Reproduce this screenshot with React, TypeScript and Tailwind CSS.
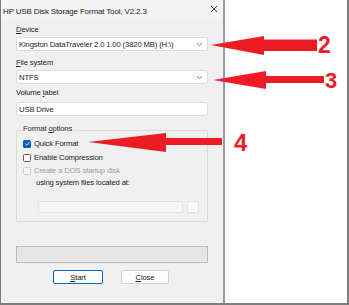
import React from "react";

function Chevron() {
  return (
    <svg width="7" height="5" viewBox="0 0 7 5" className="shrink-0">
      <path d="M1 1.2 L3.5 3.6 L6 1.2" fill="none" stroke="#6b6b6b" strokeWidth="0.9" />
    </svg>
  );
}

function Select({ value }: { value: string }) {
  return (
    <div className="mt-[2px] h-[14px] w-full bg-white border border-[#dcdcdc] rounded-[2px] flex items-center justify-between pl-[2px] pr-[4px]">
      <span className="leading-[11px] whitespace-nowrap">{value}</span>
      <Chevron />
    </div>
  );
}

export default function App() {
  return (
    <div
      className="relative w-[349px] h-[305px] bg-white border-l border-r-2 border-b-2 border-[#7d7d7d] overflow-hidden text-[7.7px] tracking-[-0.15px] text-[#1b1b1b]"
      style={{ fontFamily: '"Liberation Sans", Arial, sans-serif' }}
    >
      <div className="w-[224px] h-[303px] bg-[#f0f0f0] border-r-2 border-[#9a9a9a] flex flex-col">
        {/* title bar */}
        <div className="h-[20px] bg-[#f4f4f4] flex items-center justify-between pl-[2px] pr-[5px]">
          <span className="text-[8px] leading-[11px] pt-[2px]">HP USB Disk Storage Format Tool, V2.2.3</span>
          <svg width="8" height="8" viewBox="0 0 8 8" className="mb-[3px]">
            <path d="M0.8 0.8 L7.2 7.2 M7.2 0.8 L0.8 7.2" stroke="#333" strokeWidth="0.9" />
          </svg>
        </div>

        <div className="flex flex-col px-[15px]">
          <div className="mt-[4px] leading-[11px]">
            <span className="underline underline-offset-1">D</span>evice
          </div>
          <Select value="Kingston DataTraveler 2.0 1.00 (3820 MB) (H:\)" />

          <div className="mt-[6px] leading-[11px]">
            <span className="underline underline-offset-1">F</span>ile system
          </div>
          <Select value="NTFS" />

          <div className="mt-[3px] leading-[11px]">
            Volume <span className="underline underline-offset-1">l</span>abel
          </div>
          <div className="mt-[4px] h-[14px] w-full bg-white border border-[#dcdcdc] rounded-[2px] flex items-center pl-[2px]">
            <span className="leading-[11px]">USB Drive</span>
          </div>

          {/* group box */}
          <div className="mt-[14px] border border-[#dadada] rounded-[2px] flex flex-col pl-[6px] pb-[8px]">
            <div className="-mt-[8px] w-fit bg-[#f0f0f0] pr-[2px] leading-[11px] text-[#2b2b2b]">
              Format <span className="underline underline-offset-1">o</span>ptions
            </div>
            <div className="mt-[4px] h-[11px] flex items-center gap-[3px]">
              <div className="w-[8px] h-[8px] rounded-[1.5px] bg-[#005fb8] flex items-center justify-center">
                <svg width="7" height="7" viewBox="0 0 7 7">
                  <path d="M1.2 3.6 L2.8 5.1 L5.9 1.8" fill="none" stroke="white" strokeWidth="0.9" />
                </svg>
              </div>
              <span className="leading-[11px]">Quick Format</span>
            </div>
            <div className="mt-[3px] h-[11px] flex items-center gap-[3px]">
              <div className="w-[8px] h-[8px] rounded-[1.5px] bg-[#fafafa] border border-[#5e5e5e]" />
              <span className="leading-[11px]">Enable Compression</span>
            </div>
            <div className="mt-[2px] h-[11px] flex items-center gap-[3px]">
              <div className="w-[8px] h-[8px] rounded-[1.5px] bg-[#f5f5f5] border border-[#cfcfcf]" />
              <span className="leading-[11px] text-[#a0a0a0]">Create a DOS startup disk</span>
            </div>
            <div className="mt-[1px] pl-[13px] leading-[11px]">using system files located at:</div>
            <div className="mt-[13px] ml-[15px] flex items-center gap-[4px]">
              <div className="w-[145px] h-[12px] bg-[#f5f5f5] border border-[#e2e2e2] rounded-[2px]" />
              <div className="w-[12px] h-[12px] bg-[#fafafa] border border-[#e2e2e2] rounded-[2px] flex items-end justify-center text-[6px] leading-[8px] text-[#b0b0b0]">
                ...
              </div>
            </div>
          </div>

          {/* progress bar */}
          <div className="mt-[24px] h-[17px] w-full bg-[#e6e6e6] border border-[#bcbcbc]" />

          {/* buttons */}
          <div className="mt-[7px] flex justify-center gap-[18px] pr-[2px]">
            <div className="w-[50px] h-[14px] bg-[#fdfdfd] border border-[#0067c0] rounded-[2px] flex items-center justify-center leading-[11px]">
              <span><span className="underline underline-offset-1">S</span>tart</span>
            </div>
            <div className="w-[48px] h-[14px] bg-[#fdfdfd] border border-[#d0d0d0] rounded-[2px] flex items-center justify-center leading-[11px]">
              <span><span className="underline underline-offset-1">C</span>lose</span>
            </div>
          </div>
        </div>
      </div>

      {/* annotations overlay */}
      <svg className="absolute left-0 top-0 pointer-events-none" width="349" height="305" viewBox="0 0 349 305">
        <polygon points="210,45 263,36 263,39.5 316,39.5 316,51 263,51 263,55" fill="#ed1c24" />
        <polygon points="212,80 265,71 265,76 323,76 323,83 265,83 265,89" fill="#ed1c24" />
        <polygon points="87,142 165,133 165,138 221,138 221,145 165,145 165,152" fill="#ed1c24" />
      </svg>
      <div className="absolute left-[317px] top-[33px] text-[23px] leading-[24px] font-bold tracking-normal text-[#ed1c24]">2</div>
      <div className="absolute left-[324px] top-[69px] text-[22px] leading-[24px] font-bold tracking-normal text-[#ed1c24]">3</div>
      <div className="absolute left-[233px] top-[130px] text-[24px] leading-[26px] font-bold tracking-normal text-[#ed1c24]">4</div>
    </div>
  );
}
